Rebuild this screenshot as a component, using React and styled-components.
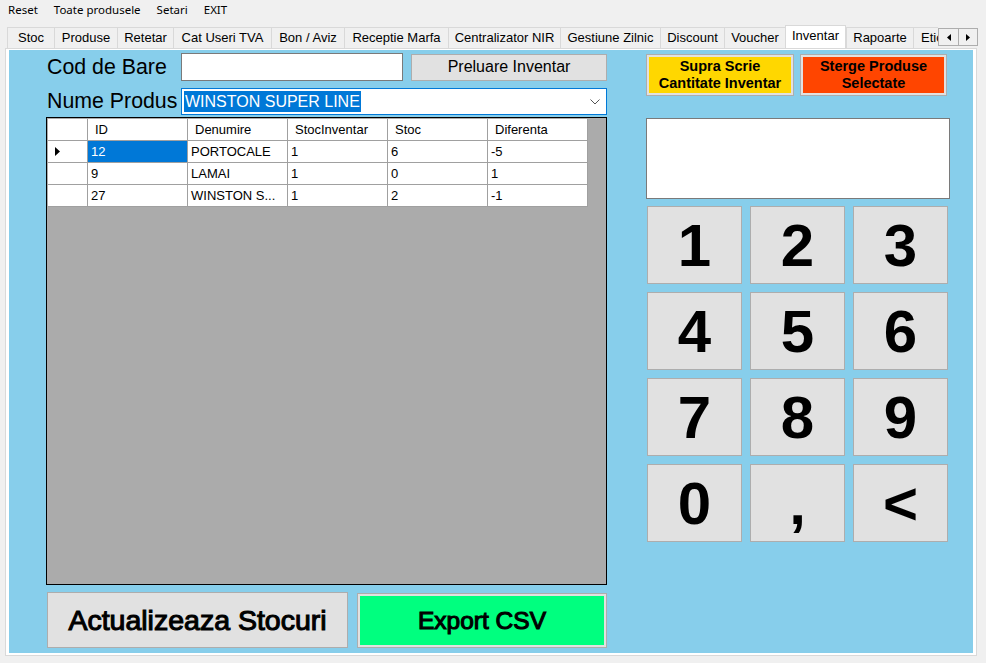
import React from "react";
import styled, { createGlobalStyle } from "styled-components";

const GlobalStyle = createGlobalStyle`
  html, body { margin: 0; padding: 0; background: #f0f0f0; }
  * { box-sizing: border-box; }
`;

const Root = styled.div`
  width: 986px;
  height: 663px;
  background: #f0f0f0;
  overflow: hidden;
  font-family: "Liberation Sans", Arial, sans-serif;
  color: #000;
`;

const MenuBar = styled.div`
  display: flex;
  align-items: center;
  height: 20px;
  font-family: "Noto Sans", "Segoe UI", sans-serif;
  font-size: 11.5px;
`;

const MenuItem = styled.div`
  padding: 0 8px;
  line-height: 20px;
  white-space: nowrap;
`;

const TabRow = styled.div`
  display: flex;
  align-items: flex-end;
  height: 28px;
  padding-left: 7px;
`;

const TabViewport = styled.div`
  display: flex;
  align-items: flex-end;
  width: 931px;
  height: 28px;
  overflow: hidden;
  position: relative;
  z-index: 1;
`;

const Tab = styled.div`
  flex: 0 0 ${(p) => p.$w}px;
  height: ${(p) => (p.$active ? 24 : 21)}px;
  margin-bottom: ${(p) => (p.$active ? -1 : 0)}px;
  border-top: 1px solid #d9d9d9;
  border-left: 1px solid #d9d9d9;
  border-right: ${(p) => (p.$active ? "1px solid #d9d9d9" : "none")};
  background: ${(p) => (p.$active ? "#ffffff" : "#f0f0f0")};
  font-size: 13px;
  line-height: 20px;
  text-align: center;
  white-space: nowrap;
`;

const ScrollArrows = styled.div`
  display: flex;
  align-self: flex-end;
  margin-bottom: 2px;
  height: 18px;
  border: 1px solid #adadad;
  background: #f0f0f0;
  position: relative;
  z-index: 2;
`;

const ArrowBtn = styled.div`
  width: 19px;
  height: 100%;
  display: flex;
  align-items: center;
  justify-content: center;
  border-left: ${(p) => (p.$split ? "1px solid #adadad" : "none")};
`;

const Panel = styled.div`
  margin-left: 5px;
  width: 972px;
  border: 1px solid #d9d9d9;
  background: #ffffff;
  padding: 1px 3px 2px 3px;
`;

const Blue = styled.div`
  height: 603px;
  background: #87ceeb;
  display: flex;
  padding: 3px 0 0 37px;
  gap: 39px;
`;

const LeftCol = styled.div`
  width: 561px;
  display: flex;
  flex-direction: column;
`;

const FormRow = styled.div`
  display: flex;
  align-items: center;
  height: ${(p) => p.$h}px;
  margin-top: ${(p) => p.$mt || 0}px;
`;

const Label = styled.div`
  width: 135px;
  padding-left: 1px;
  font-size: 21.33px;
  white-space: nowrap;
`;

const TextInput = styled.div`
  width: 222px;
  height: 28px;
  background: #fff;
  border: 1px solid #7a7a7a;
`;

const PlainButton = styled.div`
  width: ${(p) => p.$w}px;
  height: ${(p) => p.$h}px;
  margin-left: ${(p) => p.$ml || 0}px;
  background: #e1e1e1;
  border: 1px solid #adadad;
  display: flex;
  align-items: center;
  justify-content: center;
  font-size: ${(p) => p.$fs}px;
  -webkit-text-stroke: ${(p) => p.$stroke || 0}px #000;
  white-space: nowrap;
`;

const Combo = styled.div`
  width: 426px;
  height: 27px;
  background: #fff;
  border: 1px solid #0078d7;
  display: flex;
  align-items: center;
  padding: 0 6px 0 2px;
  justify-content: space-between;
`;

const Selected = styled.span`
  background: #0078d7;
  color: #fff;
  font-size: 16px;
  line-height: 21px;
  padding: 0 1px;
`;

const DataGrid = styled.div`
  margin-top: 2px;
  width: 561px;
  height: 468px;
  border: 1px solid #000;
  padding: 1px;
  background: #ababab;
`;

const Table = styled.div`
  display: grid;
  grid-template-columns: 40px repeat(5, 100px);
  grid-auto-rows: 22px;
  font-size: 13px;
`;

const Cell = styled.div`
  background: ${(p) => (p.$sel ? "#0078d7" : "#fff")};
  color: ${(p) => (p.$sel ? "#fff" : "#000")};
  border-right: 1px solid #a0a0a0;
  border-bottom: 1px solid #a0a0a0;
  display: flex;
  align-items: center;
  padding-left: ${(p) => (p.$head ? 7 : 3)}px;
  white-space: nowrap;
  overflow: hidden;
`;

const BottomRow = styled.div`
  display: flex;
  margin-top: 7px;
  gap: 9px;
  align-items: flex-start;
  padding-left: 1px;
`;

const ColorButton = styled.div`
  width: ${(p) => p.$w}px;
  height: ${(p) => p.$h}px;
  margin-top: ${(p) => p.$mt || 0}px;
  background: ${(p) => p.$bg};
  border: 1px solid #adadad;
  box-shadow: inset 0 0 0 2px #e1e1e1;
  display: flex;
  align-items: center;
  justify-content: center;
  text-align: center;
  font-size: ${(p) => p.$fs}px;
  font-weight: ${(p) => p.$fw || 700};
  -webkit-text-stroke: ${(p) => p.$stroke || 0}px #000;
  line-height: ${(p) => p.$lh || 1.2};
`;

const RightCol = styled.div`
  width: 304px;
  display: flex;
  flex-direction: column;
`;

const TopButtons = styled.div`
  display: flex;
  gap: 6px;
  margin-top: 1px;
`;

const Display = styled.div`
  margin-top: 22px;
  width: 304px;
  height: 81px;
  background: #fff;
  border: 1px solid #7a7a7a;
`;

const Keypad = styled.div`
  margin-top: 7px;
  margin-left: 1px;
  display: grid;
  grid-template-columns: repeat(3, 95px);
  grid-auto-rows: 78px;
  column-gap: 8px;
  row-gap: 8px;
`;

const Key = styled.div`
  background: #e1e1e1;
  border: 1px solid #adadad;
  display: flex;
  align-items: center;
  justify-content: center;
  font-size: 60px;
  font-weight: 700;
`;

const tabs = [
  ["Stoc", 47],
  ["Produse", 63],
  ["Retetar", 56],
  ["Cat Useri TVA", 98],
  ["Bon  / Aviz", 73],
  ["Receptie Marfa", 104],
  ["Centralizator NIR", 112],
  ["Gestiune Zilnic", 100],
  ["Discount", 64],
  ["Voucher", 61],
  ["Inventar", 61, true],
  ["Rapoarte", 67],
  ["Etichete", 62],
];

const headers = ["ID", "Denumire", "StocInventar", "Stoc", "Diferenta"];
const rows = [
  ["12", "PORTOCALE", "1", "6", "-5"],
  ["9", "LAMAI", "1", "0", "1"],
  ["27", "WINSTON S...", "1", "2", "-1"],
];

const keys = ["1", "2", "3", "4", "5", "6", "7", "8", "9", "0", ",", "<"];

export default function App() {
  return (
    <Root>
      <GlobalStyle />
      <MenuBar>
        <MenuItem>Reset</MenuItem>
        <MenuItem>Toate produsele</MenuItem>
        <MenuItem>Setari</MenuItem>
        <MenuItem>EXIT</MenuItem>
      </MenuBar>
      <TabRow>
        <TabViewport>
          {tabs.map(([t, w, a]) => (
            <Tab key={t} $w={w} $active={a}>
              {t}
            </Tab>
          ))}
        </TabViewport>
        <ScrollArrows>
          <ArrowBtn>
            <svg width="4" height="7" viewBox="0 0 4 7">
              <polygon points="4,0 4,7 0,3.5" fill="#000" />
            </svg>
          </ArrowBtn>
          <ArrowBtn $split>
            <svg width="4" height="7" viewBox="0 0 4 7">
              <polygon points="0,0 0,7 4,3.5" fill="#000" />
            </svg>
          </ArrowBtn>
        </ScrollArrows>
      </TabRow>
      <Panel>
        <Blue>
          <LeftCol>
            <FormRow $h={28}>
              <Label>Cod de Bare</Label>
              <TextInput />
              <PlainButton $w={196} $h={27} $ml={8} $fs={16}>
                Preluare Inventar
              </PlainButton>
            </FormRow>
            <FormRow $h={27} $mt={7}>
              <Label>Nume Produs</Label>
              <Combo>
                <Selected>WINSTON SUPER LINE</Selected>
                <svg width="10" height="6" viewBox="0 0 10 6">
                  <polyline points="0.5,0.5 5,5 9.5,0.5" fill="none" stroke="#555" strokeWidth="1" />
                </svg>
              </Combo>
            </FormRow>
            <DataGrid>
              <Table>
                <Cell $head />
                {headers.map((h) => (
                  <Cell key={h} $head>
                    {h}
                  </Cell>
                ))}
                {rows.map((r, i) => (
                  <React.Fragment key={i}>
                    <Cell $head>
                      {i === 0 && (
                        <svg width="5" height="9" viewBox="0 0 5 9">
                          <polygon points="0,0 5,4.5 0,9" fill="#000" />
                        </svg>
                      )}
                    </Cell>
                    {r.map((v, j) => (
                      <Cell key={j} $sel={i === 0 && j === 0}>
                        {v}
                      </Cell>
                    ))}
                  </React.Fragment>
                ))}
              </Table>
            </DataGrid>
            <BottomRow>
              <PlainButton $w={301} $h={56} $fs={28.5} $stroke={1.1}>
                Actualizeaza Stocuri
              </PlainButton>
              <ColorButton $w={250} $h={55} $mt={1} $bg="#00ff7f" $fs={24.5} $fw={400} $stroke={1.1}>
                Export CSV
              </ColorButton>
            </BottomRow>
          </LeftCol>
          <RightCol>
            <TopButtons>
              <ColorButton $w={148} $h={42} $bg="#ffd700" $fs={14.5} $lh={1.15}>
                Supra Scrie
                <br />
                Cantitate Inventar
              </ColorButton>
              <ColorButton $w={147} $h={42} $bg="#ff4500" $fs={14.5} $lh={1.15}>
                Sterge Produse
                <br />
                Selectate
              </ColorButton>
            </TopButtons>
            <Display />
            <Keypad>
              {keys.map((k) => (
                <Key key={k}>{k}</Key>
              ))}
            </Keypad>
          </RightCol>
        </Blue>
      </Panel>
    </Root>
  );
}
